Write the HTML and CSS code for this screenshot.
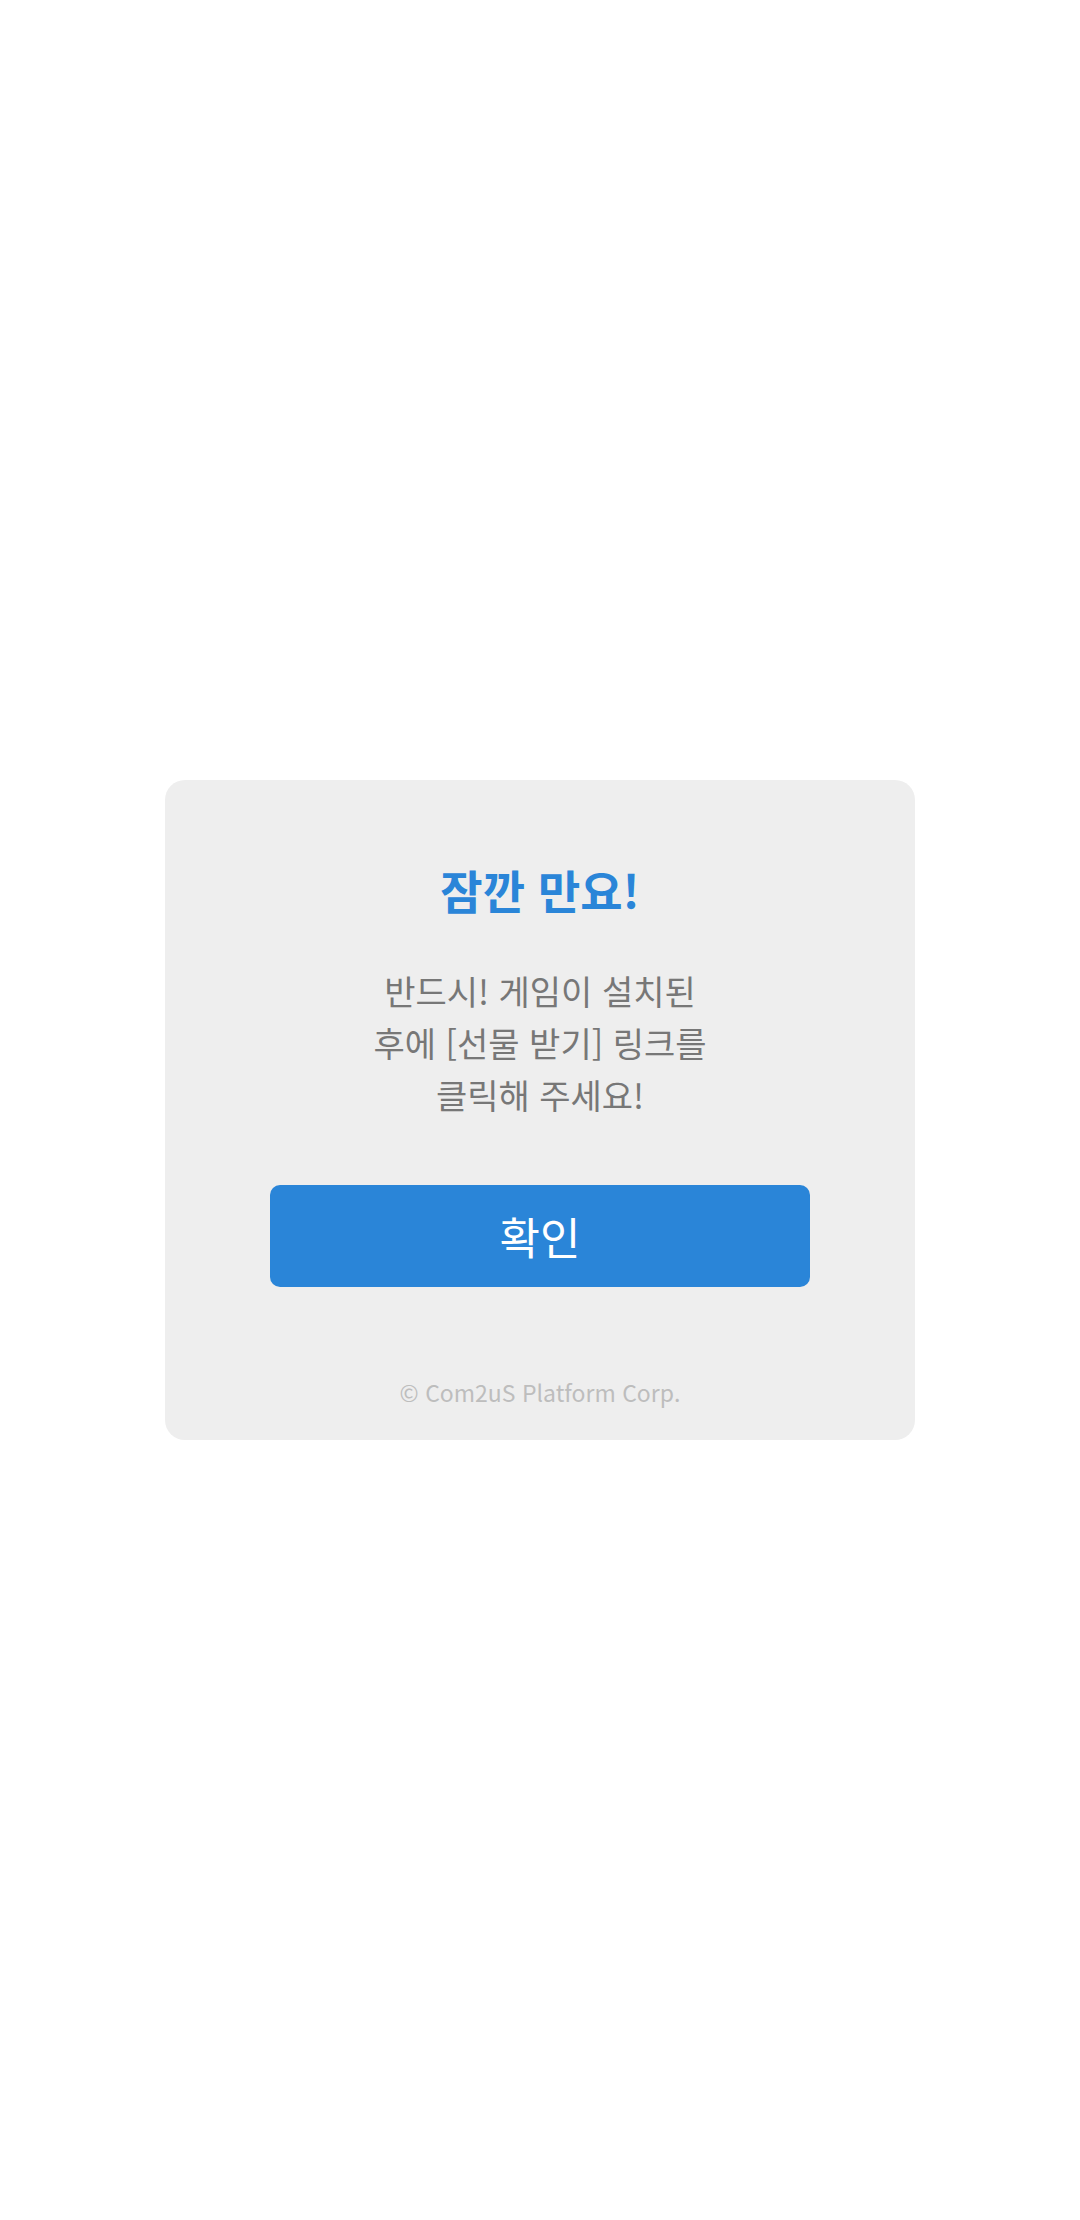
FILE: index.html
```html
<!DOCTYPE html>
<html lang="ko">
<head>
    <meta charset="UTF-8">
    <meta name="viewport" content="width=device-width, initial-scale=1.0">
    <title>잠깐 만요!</title>
    <link rel="stylesheet" href="styles.css">
</head>
<body>
    <div class="popup">
        <h1 class="popup-title">잠깐 만요!</h1>
        <p class="popup-message">
            반드시! 게임이 설치된<br>
            후에 [선물 받기] 링크를<br>
            클릭해 주세요!
        </p>
        <button class="confirm-btn">확인</button>
        <div class="copyright">© Com2uS Platform Corp.</div>
    </div>
</body>
</html>
```

FILE: styles.css
```css
* {
    margin: 0;
    padding: 0;
    box-sizing: border-box;
}

body {
    font-family: "Noto Sans CJK KR", "Noto Sans", sans-serif;
    background-color: #ffffff;
    min-height: 100vh;
    display: flex;
    align-items: center;
    justify-content: center;
}

.popup {
    width: 750px;
    height: 660px;
    background: #eeeeee;
    border-radius: 20px;
    padding: 79px 0 30px;
    display: flex;
    flex-direction: column;
    align-items: center;
    text-align: center;
}

.popup-title {
    font-size: 46px;
    line-height: 60px;
    font-weight: bold;
    color: #2a85d8;
}

.popup-message {
    margin-top: 46px;
    font-size: 34px;
    line-height: 52px;
    color: #777777;
}

.confirm-btn {
    margin-top: 64px;
    width: 540px;
    height: 102px;
    background: #2a85d8;
    color: #ffffff;
    border: none;
    border-radius: 10px;
    font-family: inherit;
    font-size: 44px;
    cursor: pointer;
}

.copyright {
    margin-top: auto;
    font-size: 23px;
    line-height: 36px;
    color: #bdbdbd;
}
```
